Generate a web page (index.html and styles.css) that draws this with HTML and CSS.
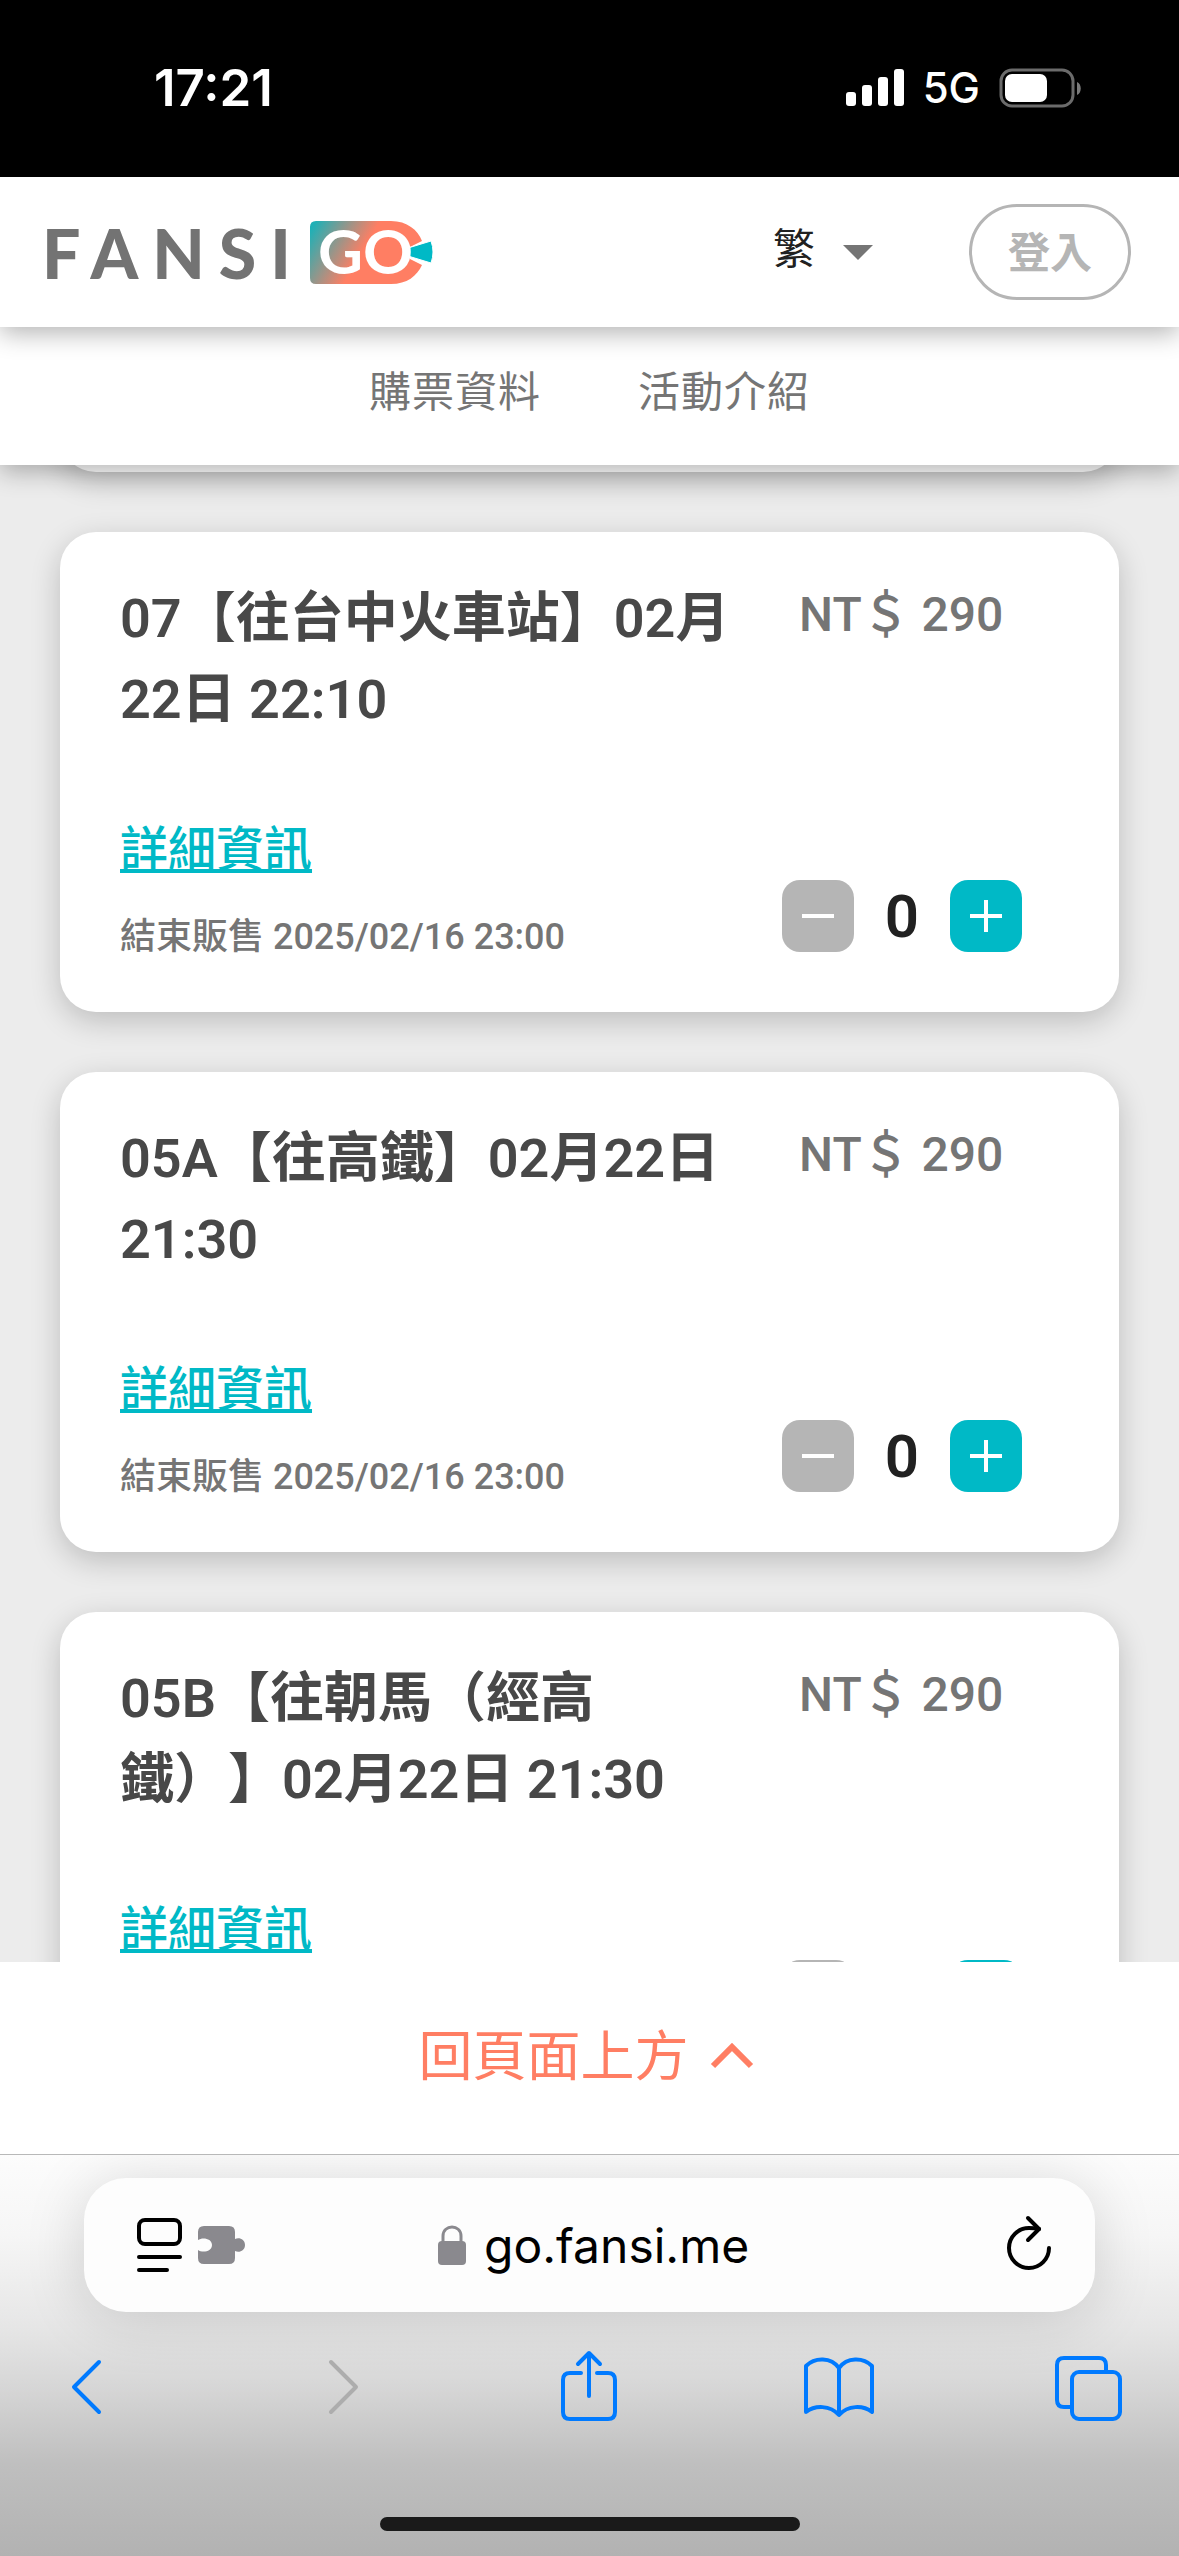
FILE: index.html
```html
<!DOCTYPE html>
<html lang="zh-Hant">
<head>
  <meta charset="UTF-8">
  <meta name="viewport" content="width=device-width, initial-scale=1.0">
  <title>FANSI GO</title>
  <link rel="stylesheet" href="styles.css">
</head>
<body>

<div class="status-bar">
  <span class="time">17:21</span>
  <div class="status-icons">
    <svg width="58" height="38" viewBox="0 0 58 38" fill="#fff">
      <rect x="0" y="23" width="10" height="14" rx="3"/>
      <rect x="16" y="16" width="10" height="21" rx="3"/>
      <rect x="32" y="8" width="10" height="29" rx="3"/>
      <rect x="48" y="0" width="10" height="37" rx="3"/>
    </svg>
    <span class="network">5G</span>
    <svg width="82" height="40" viewBox="0 0 82 40">
      <rect x="2" y="2" width="72" height="36" rx="11" fill="none" stroke="#6b6b6b" stroke-width="3"/>
      <rect x="6" y="6" width="42" height="28" rx="7" fill="#fff"/>
      <path d="M78 14c5 2 5 11 0 13z" fill="#7a7a7a"/>
    </svg>
  </div>
</div>

<header class="header">
  <a class="logo" href="#">
    <span class="logo-text">FANSI</span>
    <svg class="logo-badge" width="124" height="66" viewBox="0 0 124 66">
      <defs>
        <linearGradient id="badge" gradientUnits="userSpaceOnUse" x1="0" y1="12" x2="48" y2="40">
          <stop offset="0" stop-color="#1fb0b6"/>
          <stop offset="1" stop-color="#ff7e63"/>
        </linearGradient>
      </defs>
      <path d="M6 2H81C97 2 108 11 112 22L100 28V40L112 46C107 57 97 65 81 65H6Q0 65 0 59V8Q0 2 6 2z" fill="url(#badge)"/>
      <path d="M98 29L121 22Q125 33 121 44L98 37z" fill="#00b9c6" stroke="#fff" stroke-width="1"/>
      <text class="logo-go" x="8" y="55">GO</text>
    </svg>
  </a>
  <div class="header-right">
    <div class="language">
      <select aria-label="語言">
        <option>繁</option>
      </select>
      <svg width="30" height="16" viewBox="0 0 30 16"><path d="M0 1H30L15 16z" fill="#757575"/></svg>
    </div>
    <button class="login" type="button">登入</button>
  </div>
</header>

<nav class="navbar">
  <a href="#tickets">購票資料</a>
  <a href="#about">活動介紹</a>
</nav>

<main class="tickets" id="tickets">
  <div class="ticket-list">
    <div class="ticket ticket-passed"></div>

    <div class="ticket">
      <div class="ticket-top">
        <h2>07【往台中火車站】02月22日 22:10</h2>
        <div class="price">NT＄ 290</div>
      </div>
      <div class="ticket-bottom">
        <div class="ticket-info">
          <a href="#">詳細資訊</a>
          <p>結束販售 2025/02/16 23:00</p>
        </div>
        <div class="quantity">
          <button class="minus" type="button" aria-label="減少"><svg width="32" height="32" viewBox="0 0 32 32"><path d="M0 16H32"/></svg></button>
          <span>0</span>
          <button class="plus" type="button" aria-label="增加"><svg width="32" height="32" viewBox="0 0 32 32"><path d="M0 16H32M16 0V32"/></svg></button>
        </div>
      </div>
    </div>

    <div class="ticket">
      <div class="ticket-top">
        <h2>05A【往高鐵】02月22日 21:30</h2>
        <div class="price">NT＄ 290</div>
      </div>
      <div class="ticket-bottom">
        <div class="ticket-info">
          <a href="#">詳細資訊</a>
          <p>結束販售 2025/02/16 23:00</p>
        </div>
        <div class="quantity">
          <button class="minus" type="button" aria-label="減少"><svg width="32" height="32" viewBox="0 0 32 32"><path d="M0 16H32"/></svg></button>
          <span>0</span>
          <button class="plus" type="button" aria-label="增加"><svg width="32" height="32" viewBox="0 0 32 32"><path d="M0 16H32M16 0V32"/></svg></button>
        </div>
      </div>
    </div>

    <div class="ticket">
      <div class="ticket-top">
        <h2>05B【往朝馬（經高鐵）】02月22日 21:30</h2>
        <div class="price">NT＄ 290</div>
      </div>
      <div class="ticket-bottom">
        <div class="ticket-info">
          <a href="#">詳細資訊</a>
        </div>
        <div class="quantity">
          <button class="minus" type="button" aria-label="減少"></button>
          <button class="plus" type="button" aria-label="增加"></button>
        </div>
      </div>
    </div>
  </div>
</main>

<div class="back-to-top">
  <a href="#">回頁面上方
    <svg width="42" height="26" viewBox="0 0 42 26"><path d="M2 24L21 5L40 24" fill="none" stroke="#ff7e63" stroke-width="6"/></svg>
  </a>
</div>

<footer class="browser">
  <div class="address-bar">
    <div class="page-tools">
      <button type="button" aria-label="頁面選單">
        <svg width="46" height="56" viewBox="0 0 46 56" fill="none" stroke="#000" stroke-width="4" stroke-linecap="round">
          <rect x="3" y="3" width="41" height="24" rx="6"/>
          <path d="M3 40H44M3 53H31"/>
        </svg>
      </button>
      <button type="button" aria-label="延伸功能">
        <svg width="48" height="40" viewBox="0 0 48 40" fill="#8a898e">
          <path d="M6 1H31Q37 1 37 7V14C41 12 47 14 47 20S41 28 37 26V33Q37 39 31 39H6Q0 39 0 33V25C4 28 14 27 14 20S4 12 0 15V7Q0 1 6 1z"/>
        </svg>
      </button>
    </div>
    <div class="address">
      <svg width="28" height="40" viewBox="0 0 28 40">
        <rect x="0" y="16" width="28" height="24" rx="4" fill="#8a898e"/>
        <path d="M5 18V11C5-1 23-1 23 11V18" fill="none" stroke="#8a898e" stroke-width="3"/>
      </svg>
      <input type="text" value="go.fansi.me" aria-label="網址">
    </div>
    <button type="button" aria-label="重新載入">
      <svg width="46" height="60" viewBox="0 0 46 60" fill="none" stroke="#000" stroke-width="4" stroke-linecap="round" stroke-linejoin="round">
        <path d="M43 33A20 20 0 1 1 23 13Q28 13 33 14"/>
        <path d="M22 3L33 14L22 25"/>
      </svg>
    </button>
  </div>

  <div class="toolbar">
    <button type="button" aria-label="上一頁">
      <svg width="80" height="72" viewBox="0 0 80 72"><path d="M53 12L28 37L53 62"/></svg>
    </button>
    <button class="disabled" type="button" aria-label="下一頁">
      <svg width="80" height="72" viewBox="0 0 80 72"><path d="M34 12L59 37L34 62"/></svg>
    </button>
    <button type="button" aria-label="分享">
      <svg width="80" height="72" viewBox="0 0 80 72"><path d="M33 23H22Q15 23 15 30V62Q15 69 22 69H60Q67 69 67 62V30Q67 23 60 23H49M41 46V4M30 14L41 3L52 14"/></svg>
    </button>
    <button type="button" aria-label="書籤">
      <svg width="80" height="72" viewBox="0 0 80 72"><path d="M41 18C33 7 17 7 8 16V62C17 55 32 55 41 65C50 55 65 55 74 62V16C65 7 49 7 41 18V64"/></svg>
    </button>
    <button type="button" aria-label="分頁">
      <svg width="80" height="72" viewBox="0 0 80 72"><path d="M22 57H15Q8 57 8 50V15Q8 8 15 8H50Q57 8 57 15V21"/><rect x="23" y="22" width="48" height="47" rx="7"/></svg>
    </button>
  </div>

  <div class="home-indicator"></div>
</footer>

</body>
</html>
```

FILE: styles.css
```css
* {
  box-sizing: border-box;
}

body {
  margin: 0;
  height: 100vh;
  display: flex;
  flex-direction: column;
  overflow: hidden;
  font-family: Roboto, "Noto Sans CJK TC", sans-serif;
  background-color: #ececec;
}

a {
  text-decoration: none;
}

svg {
  display: block;
  flex: none;
  overflow: visible;
}

button {
  border: none;
  background: none;
  padding: 0;
  font-family: inherit;
  cursor: pointer;
}

/* Phone status bar */
.status-bar {
  flex: none;
  height: 177px;
  padding: 0 98px 2px 154px;
  display: flex;
  align-items: center;
  justify-content: space-between;
  background-color: #000;
  color: #fff;
  font-family: Inter, sans-serif;
}

.time {
  font-size: 51px;
  font-weight: 600;
}

.status-icons {
  display: flex;
  align-items: center;
  gap: 19px;
}

.network {
  font-size: 42px;
  font-weight: 500;
}

/* Site header */
.header {
  flex: none;
  height: 150px;
  padding: 0 48px 0 42px;
  display: flex;
  align-items: center;
  justify-content: space-between;
  background-color: #fff;
  box-shadow: 0 6px 24px rgba(0, 0, 0, 0.3);
  position: relative;
  z-index: 3;
}

.logo {
  display: flex;
  align-items: center;
  font-family: Lato, sans-serif;
  font-weight: bold;
}

.logo-text {
  width: 268px;
  color: #737373;
  font-size: 68px;
  font-weight: 900;
  letter-spacing: 14px;
}

.logo-go {
  font-size: 62px;
  fill: #fff;
}

.header-right,
.language {
  display: flex;
  align-items: center;
}

.header-right {
  gap: 96px;
}

.language {
  gap: 27px;
}

.language select {
  appearance: none;
  border: none;
  padding: 0 0 6px;
  background: none;
  color: #212121;
  font-family: inherit;
  font-size: 42px;
}

.login {
  width: 162px;
  height: 96px;
  padding-bottom: 6px;
  border: 3px solid #b5b5b5;
  border-radius: 48px;
  color: #b5b5b5;
  font-size: 42px;
  font-weight: bold;
}

.navbar {
  flex: none;
  height: 138px;
  padding-bottom: 16px;
  display: flex;
  align-items: center;
  justify-content: center;
  gap: 97px;
  background-color: #fff;
  box-shadow: 0 6px 24px rgba(0, 0, 0, 0.3);
  position: relative;
  z-index: 2;
}

.navbar a {
  color: #757575;
  font-size: 42px;
  letter-spacing: 1px;
}

/* Tickets */
.tickets {
  flex: 1;
  min-height: 0;
  overflow: hidden;
}

.ticket-list {
  display: flex;
  flex-direction: column;
  gap: 60px;
  padding: 0 60px;
  margin-top: -65px;
}

.ticket {
  height: 480px;
  padding: 46px 97px 42px 60px;
  display: flex;
  flex-direction: column;
  justify-content: space-between;
  background-color: #fff;
  border-radius: 36px;
  box-shadow: 0 9px 30px rgba(0, 0, 0, 0.2);
}

.ticket-passed {
  height: 72px;
  padding: 0;
}

.ticket-top,
.ticket-bottom {
  display: flex;
  justify-content: space-between;
}

.ticket-bottom {
  height: 156px;
}

.ticket h2 {
  flex: 1;
  max-width: 620px;
  margin: 0;
  color: #484848;
  font-size: 54px;
  font-weight: 600;
  line-height: 81px;
  text-spacing-trim: space-all;
}

.price {
  width: 223px;
  color: #757575;
  font-size: 48px;
  font-weight: 500;
  line-height: 74px;
}

.ticket-info a {
  display: block;
  color: #00b9c6;
  font-size: 48px;
  font-weight: 500;
  line-height: 72px;
  text-decoration: underline;
}

.ticket-info p {
  margin: 24px 0 0;
  color: #757575;
  font-size: 36px;
  font-weight: 500;
  line-height: 54px;
}

.quantity {
  display: flex;
  align-items: center;
  justify-content: space-between;
  align-self: flex-end;
  width: 240px;
  height: 72px;
  margin-bottom: 18px;
}

.quantity span {
  color: #212121;
  font-size: 60px;
  font-weight: 600;
}

.quantity button {
  width: 72px;
  height: 72px;
  border-radius: 18px;
  display: flex;
  align-items: center;
  justify-content: center;
}

.quantity path {
  stroke: #fff;
  stroke-width: 4;
}

.quantity .minus {
  background-color: #b5b5b5;
}

.quantity .plus {
  background-color: #00b9c6;
}

.back-to-top {
  flex: none;
  height: 192px;
  padding: 0 8px 12px 0;
  display: flex;
  align-items: center;
  justify-content: center;
  background-color: #fff;
}

.back-to-top a {
  display: flex;
  align-items: center;
  gap: 22px;
  color: #ff7e63;
  font-size: 54px;
}

.back-to-top svg {
  margin-top: 6px;
}

/* Browser controls */
.browser {
  flex: none;
  height: 402px;
  padding-top: 23px;
  display: flex;
  flex-direction: column;
  align-items: center;
  border-top: 1px solid #b8b8b8;
  background: linear-gradient(#fcfcfc 0%, #f6f6f6 20%, #e6e6e6 43%, #d6d6d6 58%, #bfbfbf 77%, #b2b2b2 100%);
  font-family: Inter, sans-serif;
  overflow: hidden;
}

.address-bar {
  width: calc(100% - 168px);
  height: 134px;
  padding: 0 43px 0 52px;
  display: flex;
  align-items: center;
  justify-content: space-between;
  background-color: #fdfdfd;
  border-radius: 42px;
  box-shadow: 0 6px 60px rgba(0, 0, 0, 0.15);
}

.page-tools {
  display: flex;
  align-items: center;
  gap: 16px;
}

.address {
  display: flex;
  align-items: center;
  gap: 18px;
}

.address input {
  width: 330px;
  border: none;
  padding: 0;
  background: none;
  color: #000;
  font-family: inherit;
  font-size: 48px;
}

.toolbar {
  width: 100%;
  margin-top: 38px;
  padding: 0 50px 0 46px;
  display: flex;
  justify-content: space-between;
}

.toolbar svg {
  fill: none;
  stroke: #007aff;
  stroke-width: 4;
  stroke-linecap: round;
  stroke-linejoin: round;
}

.toolbar .disabled svg {
  stroke: #adadad;
}

.home-indicator {
  width: 420px;
  height: 14px;
  margin-top: auto;
  margin-bottom: 25px;
  border-radius: 7px;
  background-color: #1a1a1a;
}
```
